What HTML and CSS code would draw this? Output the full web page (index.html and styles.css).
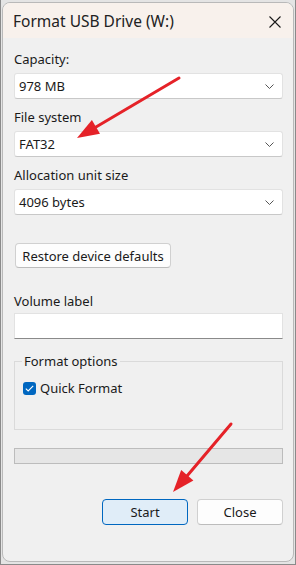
FILE: index.html
```html
<!DOCTYPE html>
<html lang="en">
<head>
  <meta charset="UTF-8">
  <meta name="viewport" content="width=device-width, initial-scale=1.0">
  <title>Format USB Drive (W:)</title>
  <link rel="stylesheet" href="styles.css">
</head>
<body>
  <div class="window">
    <div class="titlebar">
      <span class="title">Format USB Drive (W:)</span>
      <svg class="close" width="12" height="12" viewBox="0 0 12 12">
        <path d="M0.5 0.5 L11.5 11.5 M11.5 0.5 L0.5 11.5" stroke="#1a1a1a" stroke-width="1.1" fill="none"/>
      </svg>
    </div>

    <div class="content">
      <div class="field">
        <label>Capacity:</label>
        <div class="select">
          <span>978 MB</span>
          <svg width="9" height="5" viewBox="0 0 9 5"><path d="M0.5 0.5 L4.5 4.5 L8.5 0.5" stroke="#555" fill="none"/></svg>
        </div>
      </div>

      <div class="field">
        <label>File system</label>
        <div class="select">
          <span>FAT32</span>
          <svg width="9" height="5" viewBox="0 0 9 5"><path d="M0.5 0.5 L4.5 4.5 L8.5 0.5" stroke="#555" fill="none"/></svg>
        </div>
      </div>

      <div class="field">
        <label>Allocation unit size</label>
        <div class="select">
          <span>4096 bytes</span>
          <svg width="9" height="5" viewBox="0 0 9 5"><path d="M0.5 0.5 L4.5 4.5 L8.5 0.5" stroke="#555" fill="none"/></svg>
        </div>
      </div>

      <button class="btn restore">Restore device defaults</button>

      <div class="field volume">
        <label>Volume label</label>
        <div class="textbox"></div>
      </div>

      <fieldset class="options">
        <legend>Format options</legend>
        <div class="check-row">
          <span class="checkbox">
            <svg width="9" height="7" viewBox="0 0 9 7"><path d="M0.8 3.6 L3.2 6 L8.2 0.8" stroke="#fff" stroke-width="1.1" fill="none"/></svg>
          </span>
          <span>Quick Format</span>
        </div>
      </fieldset>

      <div class="progress"></div>

      <div class="actions">
        <button class="btn primary">Start</button>
        <button class="btn">Close</button>
      </div>
    </div>
  </div>

  <svg class="arrows" width="296" height="565" viewBox="0 0 296 565">
    <line x1="178" y1="78" x2="95" y2="127" stroke="#e52228" stroke-width="3" stroke-linecap="round"/>
    <polygon points="76,138 99,133.7 90.9,119.9" fill="#e52228"/>
    <line x1="230" y1="424" x2="186" y2="476" stroke="#e52228" stroke-width="3" stroke-linecap="round"/>
    <polygon points="172,492 192.4,480.5 180.2,470.1" fill="#e52228"/>
  </svg>
</body>
</html>
```

FILE: styles.css
```css
html, body {
  margin: 0;
  height: 100%;
}

body {
  position: relative;
  box-sizing: border-box;
  height: 565px;
  padding: 2px 1px 2px 1px;
  background-color: #e4e4e4;
  border: 1px solid #8a8a8a;
  border-top: none;
  font-family: "Noto Sans", "Open Sans", sans-serif;
  font-size: 13px;
  color: #1a1a1a;
}

.window {
  box-sizing: border-box;
  height: 100%;
  background-color: #f0f0f0;
  border: 1px solid #b9b9b9;
  border-radius: 8px;
  overflow: hidden;
}

.titlebar {
  display: flex;
  justify-content: space-between;
  align-items: center;
  height: 35px;
  padding: 0 12px 0 10px;
  background-color: #f8f1ec;
}

.title {
  font-size: 15.5px;
  color: #222;
  margin-top: 1px;
}

.close {
  margin-top: 2px;
}

.content {
  padding: 13px 10px 0 11px;
}

.field label {
  display: block;
  line-height: 16px;
  margin-bottom: 6px;
}

.field {
  margin-bottom: 10px;
}

.select {
  box-sizing: border-box;
  height: 26px;
  display: flex;
  justify-content: space-between;
  align-items: center;
  padding: 0 8px 0 4px;
  background-color: #fff;
  border: 1px solid #e2e2e2;
  border-bottom-color: #c8c8c8;
  border-radius: 3px;
}

.btn {
  box-sizing: border-box;
  height: 26px;
  font-family: inherit;
  font-size: 13px;
  color: #1a1a1a;
  background-color: #fdfdfd;
  border: 1px solid #d0d0d0;
  border-bottom-color: #bcbcbc;
  border-radius: 4px;
  padding: 0;
}

.restore {
  margin: 18px 0 0 1px;
  width: 156px;
  height: 25px;
}

.volume {
  margin-top: 25px;
  margin-bottom: 0;
}

.volume label {
  margin-bottom: 4px;
}

.textbox {
  box-sizing: border-box;
  height: 26px;
  background-color: #fff;
  border: 1px solid #e2e2e2;
  border-bottom: 1px solid #8a8a8a;
}

.options {
  margin: 14px 0 0 0;
  padding: 10px 8px 0 8px;
  height: 77px;
  box-sizing: border-box;
  border: 1px solid #dadada;
  border-radius: 0;
}

.options legend {
  padding: 0 2px;
  margin-left: -1px;
  line-height: 16px;
}

.check-row {
  display: flex;
  align-items: center;
  gap: 4px;
}

.checkbox {
  display: flex;
  align-items: center;
  justify-content: center;
  width: 13px;
  height: 13px;
  background-color: #0067c0;
  border-radius: 3px;
}

.progress {
  box-sizing: border-box;
  height: 16px;
  margin-top: 18px;
  background-color: #e6e6e6;
  border: 1px solid #bcbcbc;
}

.actions {
  display: flex;
  justify-content: flex-end;
  gap: 9px;
  margin-top: 35px;
}

.actions .btn {
  width: 86px;
}

.primary {
  background-color: #e0edf8;
  border-color: #0067c0;
}

.arrows {
  position: absolute;
  left: 0;
  top: 0;
  pointer-events: none;
}
```
